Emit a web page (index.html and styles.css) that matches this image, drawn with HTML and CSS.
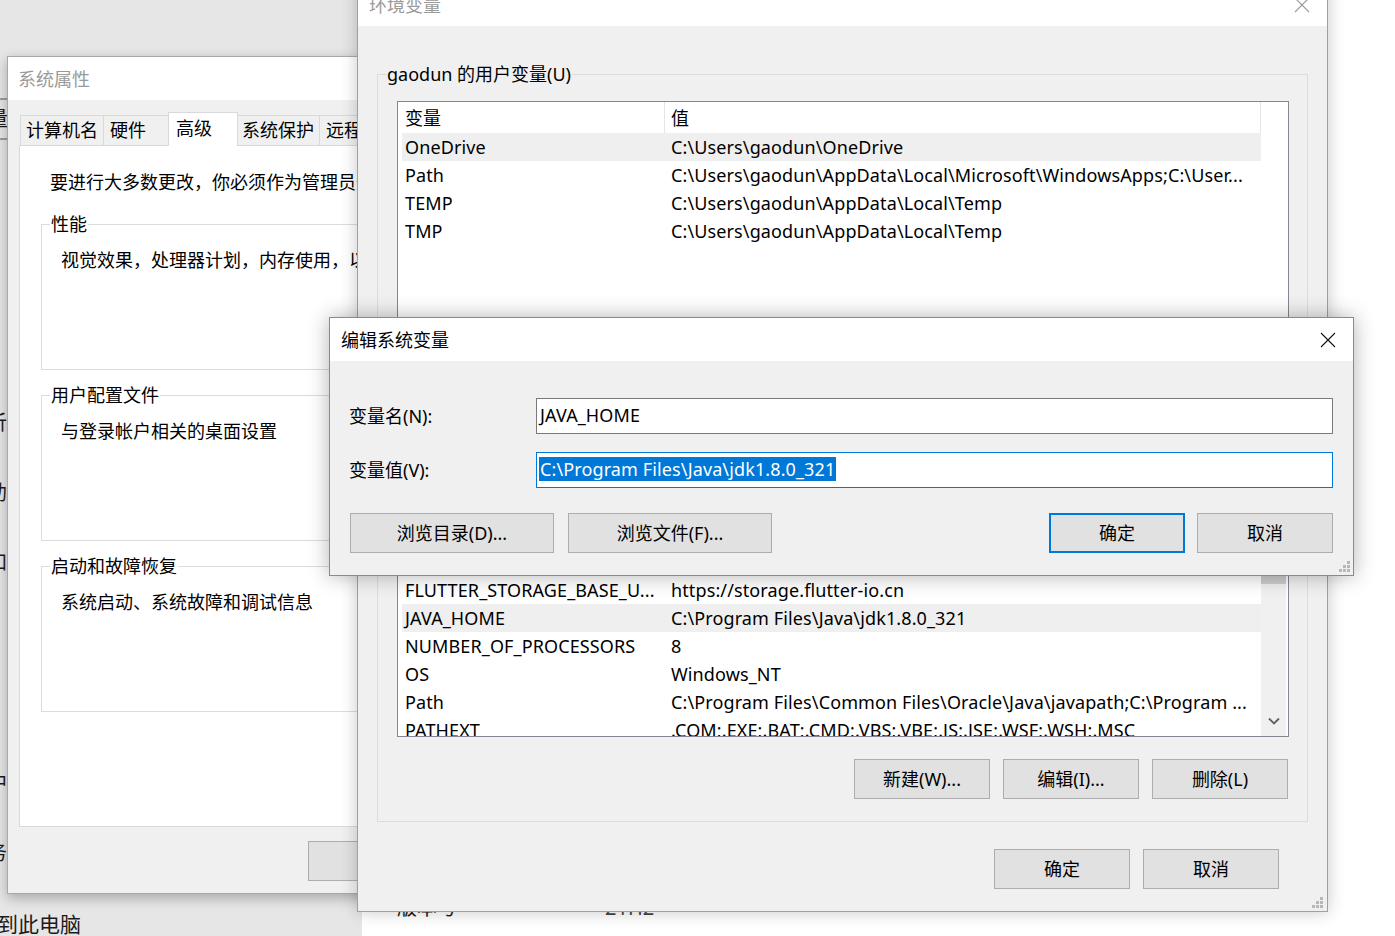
FILE: index.html
```html
<!DOCTYPE html>
<html lang="zh-CN">
<head>
<meta charset="utf-8">
<title>环境变量</title>
<link rel="stylesheet" href="styles.css">
</head>
<body>
<div class="desk">

  <aside class="bg-side">
    <div class="side-tab"><span>量</span></div>
    <div class="side-char c-a">析</div>
    <div class="side-char c-b">助</div>
    <div class="side-char c-b">和</div>
    <div class="side-char c-c">中</div>
    <div class="side-char c-b">务</div>
    <div class="side-foot">到此电脑</div>
  </aside>

  <main class="bg-main">
    <div class="about-row"><span class="about-k">版本号</span><span class="about-v">21H2</span></div>
    <div class="about-row"><span class="about-k">安装日期</span><span class="about-v"></span></div>
  </main>

  <section class="win sysprops">
    <header class="titlebar inactive"><span class="title">系统属性</span></header>
    <div class="win-body sp-body">
      <div class="tabs">
        <div class="tab t1">计算机名</div>
        <div class="tab t2">硬件</div>
        <div class="tab t3 sel">高级</div>
        <div class="tab t4">系统保护</div>
        <div class="tab t5">远程</div>
      </div>
      <div class="tabpanel">
        <p class="note">要进行大多数更改，你必须作为管理员登录。</p>
        <fieldset class="gbox sp-gbox">
          <legend>性能</legend>
          <div class="gtext">视觉效果，处理器计划，内存使用，以及虚拟内存</div>
        </fieldset>
        <fieldset class="gbox sp-gbox">
          <legend>用户配置文件</legend>
          <div class="gtext">与登录帐户相关的桌面设置</div>
        </fieldset>
        <fieldset class="gbox sp-gbox">
          <legend>启动和故障恢复</legend>
          <div class="gtext">系统启动、系统故障和调试信息</div>
        </fieldset>
      </div>
      <div class="sp-buttons">
        <button class="btn w136">确定</button>
        <button class="btn w136">取消</button>
      </div>
    </div>
  </section>

  <section class="win envvars">
    <header class="titlebar inactive"><span class="title">环境变量</span>
      <span class="close"><svg width="16" height="16" viewBox="0 0 16 16"><path d="M1 1L15 15M15 1L1 15" stroke="#9a9a9a" stroke-width="1.1" fill="none"/></svg></span>
    </header>
    <div class="win-body env-body">
      <fieldset class="gbox env-gbox user-gbox">
        <legend>gaodun 的用户变量(U)</legend>
        <div class="listview user-list">
          <div class="lv-main">
            <div class="lv-head"><div class="lv-cell c1">变量</div><div class="lv-cell c2">值</div></div>
            <div class="lv-row sel"><div class="lv-cell c1">OneDrive</div><div class="lv-cell c2">C:\Users\gaodun\OneDrive</div></div>
            <div class="lv-row"><div class="lv-cell c1">Path</div><div class="lv-cell c2">C:\Users\gaodun\AppData\Local\Microsoft\WindowsApps;C:\User...</div></div>
            <div class="lv-row"><div class="lv-cell c1">TEMP</div><div class="lv-cell c2">C:\Users\gaodun\AppData\Local\Temp</div></div>
            <div class="lv-row"><div class="lv-cell c1">TMP</div><div class="lv-cell c2">C:\Users\gaodun\AppData\Local\Temp</div></div>
          </div>
          <div class="lv-side"></div>
        </div>
        <div class="gbuttons user-buttons">
          <button class="btn w136">新建(N)...</button>
          <button class="btn w136">编辑(E)...</button>
          <button class="btn w136">删除(D)</button>
        </div>
      </fieldset>

      <fieldset class="gbox env-gbox sys-gbox">
        <legend>系统变量(S)</legend>
        <div class="listview sys-list">
          <div class="lv-main">
            <div class="lv-head"><div class="lv-cell c1">变量</div><div class="lv-cell c2">值</div></div>
            <div class="lv-row"><div class="lv-cell c1">CLASSPATH</div><div class="lv-cell c2">.;%JAVA_HOME%\lib</div></div>
            <div class="lv-row"><div class="lv-cell c1">ComSpec</div><div class="lv-cell c2">C:\Windows\system32\cmd.exe</div></div>
            <div class="lv-row"><div class="lv-cell c1">DriverData</div><div class="lv-cell c2">C:\Windows\System32\Drivers\DriverData</div></div>
            <div class="lv-row"><div class="lv-cell c1">FLUTTER_ROOT</div><div class="lv-cell c2">C:\flutter</div></div>
            <div class="lv-row"><div class="lv-cell c1">FLUTTER_STORAGE_BASE_U...</div><div class="lv-cell c2">https://storage.flutter-io.cn</div></div>
            <div class="lv-row sel"><div class="lv-cell c1">JAVA_HOME</div><div class="lv-cell c2">C:\Program Files\Java\jdk1.8.0_321</div></div>
            <div class="lv-row"><div class="lv-cell c1">NUMBER_OF_PROCESSORS</div><div class="lv-cell c2">8</div></div>
            <div class="lv-row"><div class="lv-cell c1">OS</div><div class="lv-cell c2">Windows_NT</div></div>
            <div class="lv-row"><div class="lv-cell c1">Path</div><div class="lv-cell c2">C:\Program Files\Common Files\Oracle\Java\javapath;C:\Program ...</div></div>
            <div class="lv-row"><div class="lv-cell c1">PATHEXT</div><div class="lv-cell c2">.COM;.EXE;.BAT;.CMD;.VBS;.VBE;.JS;.JSE;.WSF;.WSH;.MSC</div></div>
          </div>
          <div class="lv-side">
            <div class="scrollbar">
              <div class="sb-arrow up"><svg width="12" height="8" viewBox="0 0 12 8"><path d="M1 6.5L6 1.5L11 6.5" fill="none" stroke="#606060" stroke-width="1.8"/></svg></div>
              <div class="sb-thumb"></div>
              <div class="sb-track"></div>
              <div class="sb-arrow down"><svg width="12" height="8" viewBox="0 0 12 8"><path d="M1 1.5L6 6.5L11 1.5" fill="none" stroke="#606060" stroke-width="1.8"/></svg></div>
            </div>
          </div>
        </div>
        <div class="gbuttons">
          <button class="btn w136">新建(W)...</button>
          <button class="btn w136">编辑(I)...</button>
          <button class="btn w136">删除(L)</button>
        </div>
      </fieldset>

      <div class="env-buttons">
        <button class="btn w136">确定</button>
        <button class="btn w136">取消</button>
      </div>
      <span class="grip"><svg width="11" height="11" viewBox="0 0 11 11"><g fill="#b8b8b8"><rect x="8" y="0" width="3" height="3"/><rect x="4" y="4" width="3" height="3"/><rect x="8" y="4" width="3" height="3"/><rect x="0" y="8" width="3" height="3"/><rect x="4" y="8" width="3" height="3"/><rect x="8" y="8" width="3" height="3"/></g></svg></span>
    </div>
  </section>

  <section class="win editvar">
    <header class="titlebar"><span class="title">编辑系统变量</span>
      <span class="close"><svg width="16" height="16" viewBox="0 0 16 16"><path d="M1 1L15 15M15 1L1 15" stroke="#111" stroke-width="1.1" fill="none"/></svg></span>
    </header>
    <div class="win-body ev-body">
      <div class="ev-form">
        <label class="ev-label">变量名(N):</label>
        <div class="field"><span class="field-text">JAVA_HOME</span></div>
        <label class="ev-label">变量值(V):</label>
        <div class="field focus"><span class="field-text selection">C:\Program Files\Java\jdk1.8.0_321</span></div>
      </div>
      <div class="ev-buttons">
        <div class="bgroup left">
          <button class="btn w204">浏览目录(D)...</button>
          <button class="btn w204">浏览文件(F)...</button>
        </div>
        <div class="bgroup right">
          <button class="btn w136 primary">确定</button>
          <button class="btn w136">取消</button>
        </div>
      </div>
      <span class="grip"><svg width="11" height="11" viewBox="0 0 11 11"><g fill="#b8b8b8"><rect x="8" y="0" width="3" height="3"/><rect x="4" y="4" width="3" height="3"/><rect x="8" y="4" width="3" height="3"/><rect x="0" y="8" width="3" height="3"/><rect x="4" y="8" width="3" height="3"/><rect x="8" y="8" width="3" height="3"/></g></svg></span>
    </div>
  </section>

</div>
</body>
</html>
```

FILE: styles.css
```css
* { box-sizing: border-box; }
html, body { margin: 0; padding: 0; }
body {
  width: 1395px;
  height: 936px;
  overflow: hidden;
  font-family: "Noto Sans", "Noto Sans CJK SC", sans-serif;
  font-size: 18px;
  line-height: 24px;
  color: #000;
  background: #fff;
}
.desk { position: relative; width: 1395px; height: 936px; overflow: hidden; background: #fff; }

/* ---------- background windows ---------- */
.bg-side {
  position: absolute; left: 0; top: 0; width: 362px; height: 936px;
  background: #e6e6e6; display: flex; flex-direction: column;
  font-size: 20px; color: #1a1a1a; z-index: 0; white-space: nowrap;
}
.side-tab {
  margin-top: 98px; height: 47px; width: 9px;
  border-top: 2px solid #9d9d9d; border-bottom: 2px solid #9d9d9d;
  display: flex; align-items: center;
}
.side-tab span { margin-left: -12px; }
.side-char { height: 24px; margin-left: -13px; }
.c-a { margin-top: 271px; }
.c-b { margin-top: 46px; }
.c-c { margin-top: 196px; }
.side-foot { margin-top: 47px; margin-left: -3px; font-size: 21px; height: 24px; }

.bg-main {
  position: absolute; left: 362px; top: 0; width: 1033px; height: 936px;
  background: #fff; padding: 896px 0 0 35px; z-index: 0;
  display: flex; flex-direction: column; gap: 16px;
  font-size: 20px; white-space: nowrap;
}
.about-row { display: flex; height: 24px; align-items: center; }
.about-k { width: 208px; color: #1a1a1a; }
.about-v { color: #444; }

/* ---------- window chrome ---------- */
.win { position: absolute; display: flex; flex-direction: column; background: #f0f0f0; overflow: hidden; white-space: nowrap; }
.titlebar { height: 43px; flex: none; background: #fff; display: flex; align-items: center; justify-content: space-between; }
.title { padding-left: 11px; }
.inactive .title { color: #9a9a9a; }
.close { width: 50px; height: 43px; display: flex; align-items: center; justify-content: center; }
.win-body { flex: 1; min-height: 0; position: relative; }

.btn {
  font: inherit; line-height: 24px; height: 40px; margin: 0; padding: 0;
  border: 1px solid #adadad; background: #e1e1e1; color: #000;
  display: flex; align-items: center; justify-content: center; flex: none;
}
.btn.primary { border: 2px solid #0078d7; }
.w136 { width: 136px; }
.w204 { width: 204px; }

.gbox { margin: 0; padding: 0; border: 1px solid #dcdcdc; min-width: 0; }
.gbox > legend { margin-left: 8px; padding: 0 1px; line-height: 24px; }

.grip { position: absolute; right: 4px; bottom: 3px; width: 11px; height: 11px; display: block; line-height: 0; }

/* ---------- 系统属性 ---------- */
.sysprops {
  left: 7px; top: 56px; width: 420px; height: 838px;
  border: 1px solid #a8a8a8; box-shadow: 0 4px 12px rgba(0,0,0,.28); z-index: 1;
}
.sysprops .title { padding-left: 10px; }
.sp-body { padding: 12px 12px 0 12px; display: flex; flex-direction: column; }
.tabs { display: flex; align-items: flex-end; height: 34px; flex: none; }
.tab {
  height: 31px; border: 1px solid #d9d9d9; border-bottom: none;
  background: #f0f0f0; padding: 2px 0 0 5px; margin-left: -1px; flex: none;
}
.tab.t1 { width: 84px; margin-left: 0; }
.tab.t2 { width: 66px; padding-left: 6px; }
.tab.t3 { width: 70px; }
.tab.t4 { width: 83px; padding-left: 4px; }
.tab.t5 { width: 62px; padding-left: 6px; }
.tab.sel { height: 34px; background: #fff; padding: 3px 0 0 7px; position: relative; z-index: 1; }
.tabpanel {
  margin: -1px 0 0 -1px; height: 682px; flex: none;
  background: #fff; border: 1px solid #d9d9d9;
  padding: 24px 0 0 21px;
}
.note { margin: 0; padding-left: 9px; height: 24px; }
.sp-gbox { height: 158px; margin: 18px 0 0 0; }
.sp-gbox + .sp-gbox { margin-top: 13px; }
.gtext { padding: 12px 0 0 19px; }
.sp-buttons { display: flex; gap: 12px; margin-top: 14px; padding-left: 288px; }

/* ---------- 环境变量 ---------- */
.envvars {
  left: 357px; top: -18px; width: 971px; height: 930px;
  border: 1px solid #a0a0a0; box-shadow: 0 0 16px rgba(0,0,0,.22); z-index: 2;
}
.env-body { padding: 36px 19px 0 19px; display: flex; flex-direction: column; }
.listview {
  display: flex; border: 1px solid #828790; background: #fff; overflow: hidden;
  margin: 15px 18px 0 19px; letter-spacing: .12px;
}
.user-list { height: 220px; }
.sys-list { height: 305px; }
.lv-main { flex: 1; min-width: 0; padding-left: 4px; }
.lv-side { width: 27px; flex: none; display: flex; }
.lv-head, .lv-row { display: grid; grid-template-columns: 263px 1fr; }
.lv-head { height: 31px; }
.lv-head .lv-cell { border-right: 1px solid #e5e5e5; display: flex; align-items: center; }
.lv-row { height: 28px; align-items: center; }
.lv-row.sel { background: #efefef; }
.lv-cell { overflow: hidden; }
.lv-cell.c1 { padding-left: 3px; }
.lv-cell.c2 { padding-left: 6px; }

.scrollbar { width: 25px; background: #f0f0f0; display: flex; flex-direction: column; }
.sb-arrow { height: 24px; flex: none; display: flex; align-items: center; justify-content: center; }
.sb-arrow.down { padding-bottom: 4px; height: 26px; }
.sb-thumb { height: 127px; background: #cdcdcd; flex: none; }
.sb-track { flex: 1; }

.user-gbox { padding-bottom: 12px; }
.sys-gbox { margin-top: 7px; padding-bottom: 22px; }
.gbuttons { display: flex; justify-content: flex-end; gap: 13px; margin: 22px 19px 0 0; }
.user-buttons { margin-top: 12px; }
.env-buttons { display: flex; justify-content: flex-end; gap: 13px; margin-top: 27px; padding-right: 29px; }

/* ---------- 编辑系统变量 ---------- */
.editvar {
  left: 329px; top: 317px; width: 1025px; height: 259px;
  border: 1px solid #8a8a8a; box-shadow: 0 0 20px rgba(0,0,0,.3); z-index: 3;
}
.ev-form {
  display: grid; grid-template-columns: 187px 1fr; row-gap: 18px; align-items: center;
  padding: 37px 20px 0 19px;
}
.ev-label { display: block; }
.field {
  height: 36px; border: 1px solid #7a7a7a; background: #fff;
  display: flex; align-items: center; padding: 0 0 2px 3px; letter-spacing: .12px;
}
.field.focus { border-color: #0078d7; padding-left: 2px; }
.field-text { line-height: 24px; }
.selection { background: #0078d7; color: #fff; padding: 0 1px; }
.ev-buttons { display: flex; justify-content: space-between; margin-top: 25px; padding: 0 20px 0 20px; }
.bgroup { display: flex; }
.bgroup.left { gap: 14px; }
.bgroup.right { gap: 12px; }
.editvar .grip { right: 3px; bottom: 3px; }
```
